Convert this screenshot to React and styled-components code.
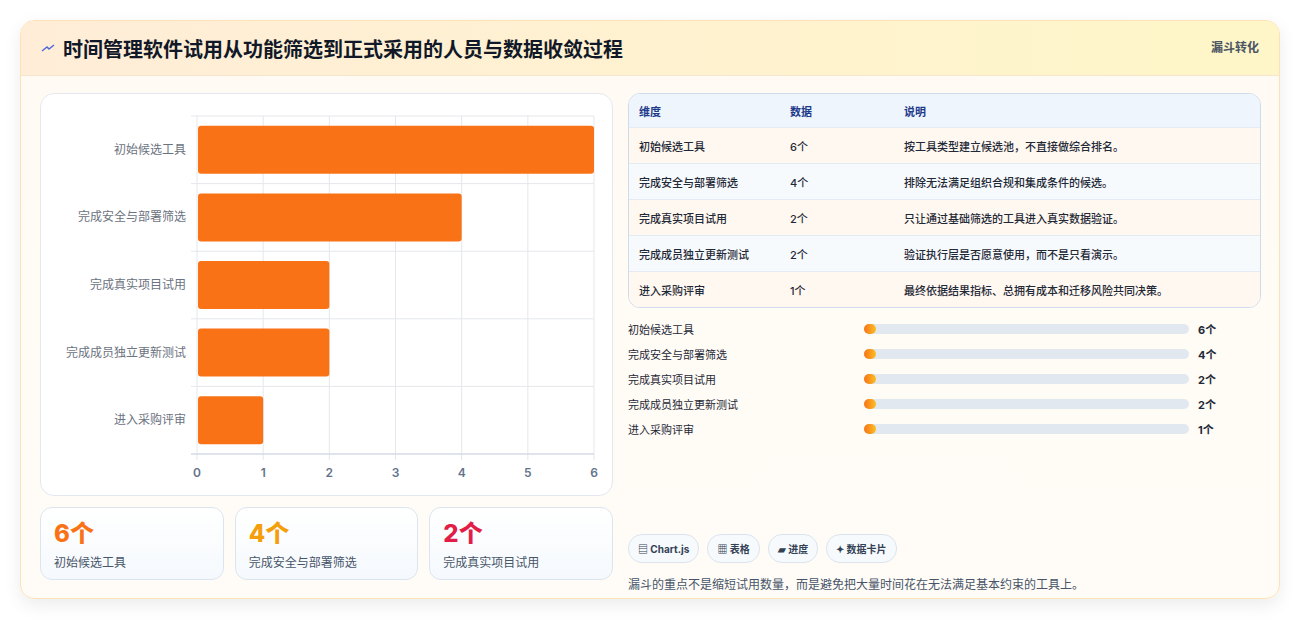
import React from "react";
import styled, { createGlobalStyle } from "styled-components";

const Global = createGlobalStyle`
  html,body{margin:0;padding:0;background:#f3f4f6;}
  body{font-family:"Inter","Noto Sans CJK SC",sans-serif;color:#1f2937;}
`;
const Page = styled.div`padding:20px 20px 22px;background:#fff;height:621px;box-sizing:border-box;`;
const Card = styled.div`
  border:1px solid #fde2b8;border-radius:14px;overflow:hidden;
  background:linear-gradient(180deg,#fffaf3,#fffcf7);
  box-shadow:0 6px 18px rgba(0,0,0,.08);height:579px;box-sizing:border-box;
`;
const Header = styled.div`
  height:55px;box-sizing:border-box;display:flex;align-items:center;justify-content:space-between;
  padding:0 20px 0 20px;background:linear-gradient(90deg,#ffedd8,#fef6c8);border-bottom:1px solid #f5e6cc;
`;
const Title = styled.h1`margin:0;font-size:20px;font-weight:700;color:#111827;display:flex;align-items:center;gap:8px;`;
const Tag = styled.span`font-size:12px;font-weight:700;color:#4b5563;align-self:flex-start;margin-top:17px;`;
const Body = styled.div`display:grid;grid-template-columns:573px 633px;gap:15px;padding:17px 19px 0 19px;`;
const Col = styled.div`display:flex;flex-direction:column;`;
const ChartBox = styled.div`height:403px;box-sizing:border-box;border:1px solid #e3e8f0;border-radius:14px;background:#fff;`;
const Kpis = styled.div`display:grid;grid-template-columns:repeat(3,1fr);gap:11px;margin-top:11px;`;
const Kpi = styled.div`height:73px;box-sizing:border-box;border:1px solid #dbe5f0;border-radius:12px;background:linear-gradient(180deg,#fff,#f5f9fd);padding:12px 13px;`;
const KpiVal = styled.div`font-size:24px;font-weight:800;color:${p=>p.c};line-height:28px;`;
const KpiLbl = styled.div`font-size:12px;color:#475569;margin-top:5px;`;
const Table = styled.div`border:1px solid #cfdbea;border-radius:12px;overflow:hidden;background:#fff;`;
const Row = styled.div`
  display:grid;grid-template-columns:151px 114px 1fr;height:${p=>p.h?33:35}px;align-items:center;padding:0 10px;
  font-size:${p=>p.h?11:11}px;font-weight:${p=>p.h?700:500};color:${p=>p.h?"#1e3a8a":"#1f2937"};
  background:${p=>p.h?"#eef5fd":p.alt?"#f7fafd":"#fff8f0"};border-top:${p=>p.first?"none":"1px solid #e5ebf2"};
`;
const Bars = styled.div`display:flex;flex-direction:column;gap:7px;margin-top:12px;`;
const BarRow = styled.div`display:grid;grid-template-columns:236px 325px 1fr;align-items:center;height:18px;font-size:11px;color:#1f2937;`;
const Track = styled.div`height:10px;border-radius:5px;background:#e2e8f0;position:relative;`;
const Dot = styled.div`width:12px;height:10px;border-radius:5px;background:linear-gradient(90deg,#f97316,#fbbf24);`;
const Val = styled.span`font-weight:700;margin-left:9px;`;
const Chips = styled.div`display:flex;gap:8px;margin-top:${p=>p.mt}px;`;
const Chip = styled.span`font-size:10px;font-weight:700;color:#334155;border:1px solid #dbe4ee;background:#f7fafd;border-radius:14px;padding:6px 9px;`;
const Note = styled.p`margin:12px 0 0;font-size:12px;color:#475569;`;

const cats=[["初始候选工具",6],["完成安全与部署筛选",4],["完成真实项目试用",2],["完成成员独立更新测试",2],["进入采购评审",1]];
const desc=["按工具类型建立候选池，不直接做综合排名。","排除无法满足组织合规和集成条件的候选。","只让通过基础筛选的工具进入真实数据验证。","验证执行层是否愿意使用，而不是只看演示。","最终依据结果指标、总拥有成本和迁移风险共同决策。"];

function Chart(){
  const x0=156,x1=553,y0=22,y1=360,u=(x1-x0)/6,step=(y1-y0)/5;
  return(<svg width="571" height="401">
    {[0,1,2,3,4,5,6].map(i=><line key={i} x1={x0+i*u} x2={x0+i*u} y1={y0} y2={y1+6} stroke="#e5e7eb"/>)}
    {[0,1,2,3,4,5].map(i=><line key={i} x1={x0-6} x2={x1} y1={y0+i*step} y2={y0+i*step} stroke="#e5e7eb"/>)}
    <line x1={x0-6} x2={x1} y1={y1} y2={y1} stroke="#cbd5e1"/>
    {cats.map(([l,v],i)=>{const cy=y0+step*(i+.5);return <g key={i}>
      <rect x={x0+1} y={cy-24} width={v*u-1} height={48} rx="3" fill="#f97316"/>
      <text x={x0-11} y={cy+4} textAnchor="end" fontSize="12" fill="#6b7280" fontFamily="Noto Sans CJK SC">{l}</text></g>})}
    {[0,1,2,3,4,5,6].map(i=><text key={i} x={x0+i*u} y={383} textAnchor="middle" fontSize="12" fill="#64748b" fontWeight="600" fontFamily="Inter">{i}</text>)}
  </svg>);
}

export default function App(){
  return(<Page><Global/><Card>
    <Header>
      <Title><svg width="14" height="10" viewBox="0 0 14 10"><path d="M1 8 L6 4 L8 6 L13 2" stroke="#4f6bd8" strokeWidth="1.5" fill="none"/></svg>时间管理软件试用从功能筛选到正式采用的人员与数据收敛过程</Title>
      <Tag>漏斗转化</Tag>
    </Header>
    <Body>
      <Col>
        <ChartBox><Chart/></ChartBox>
        <Kpis>
          <Kpi><KpiVal c="#f97316">6个</KpiVal><KpiLbl>初始候选工具</KpiLbl></Kpi>
          <Kpi><KpiVal c="#f59e0b">4个</KpiVal><KpiLbl>完成安全与部署筛选</KpiLbl></Kpi>
          <Kpi><KpiVal c="#e11d48">2个</KpiVal><KpiLbl>完成真实项目试用</KpiLbl></Kpi>
        </Kpis>
      </Col>
      <Col>
        <Table>
          <Row h first><span>维度</span><span>数据</span><span>说明</span></Row>
          {cats.map(([l,v],i)=><Row key={i} alt={i%2===1}><span>{l}</span><span>{v}个</span><span>{desc[i]}</span></Row>)}
        </Table>
        <Bars>
          {cats.map(([l,v],i)=><BarRow key={i}><span>{l}</span><Track><Dot/></Track><Val>{v}个</Val></BarRow>)}
        </Bars>
        <Chips mt={96}><Chip>▤ Chart.js</Chip><Chip>▦ 表格</Chip><Chip>▰ 进度</Chip><Chip>✦ 数据卡片</Chip></Chips>
        <Note>漏斗的重点不是缩短试用数量，而是避免把大量时间花在无法满足基本约束的工具上。</Note>
      </Col>
    </Body>
  </Card></Page>);
}
